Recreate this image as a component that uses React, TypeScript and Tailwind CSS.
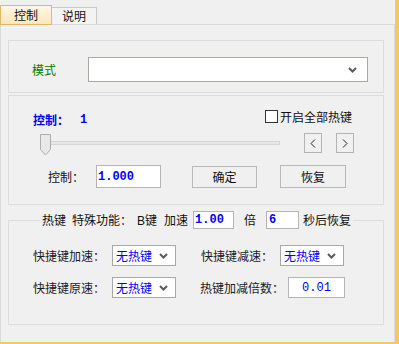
import React from 'react';

const cjk = { fontFamily: '"Noto Sans CJK SC", "Liberation Sans", sans-serif' };
const mono = { fontFamily: '"Liberation Mono", "Noto Sans CJK SC", monospace' };

function Chevron() {
  return (
    <svg width="9" height="6" viewBox="0 0 9 6" className="shrink-0">
      <polyline points="1,1 4.5,4.5 8,1" fill="none" stroke="#5a5a5a" strokeWidth="2" />
    </svg>
  );
}

function HotkeySelect() {
  return (
    <div className="w-[64px] h-[21px] border border-[#a9a9a9] bg-white flex items-center justify-between pl-[3px] pr-[7px] text-[12px] leading-none text-[#0000ff]">
      <span>无热键</span>
      <Chevron />
    </div>
  );
}

function Arrow({ dir }: { dir: 'left' | 'right' }) {
  return (
    <div className="w-[18px] h-[20px] border border-[#b4b4b4] bg-[#f0f0f0] flex items-center justify-center">
      <svg width="6" height="9" viewBox="0 0 6 9">
        <polyline
          points={dir === 'left' ? '5,0.5 1,4.5 5,8.5' : '1,0.5 5,4.5 1,8.5'}
          fill="none"
          stroke="#222"
          strokeWidth="1"
        />
      </svg>
    </div>
  );
}

function App() {
  return (
    <div
      className="w-[399px] h-[344px] flex flex-col bg-[#f0f0f0] border-r-[4px] border-b-[2px] border-[#f6c766] text-[12px] text-[#111]"
      style={cjk}
    >
      {/* tabs */}
      <div className="h-[24px] flex items-end shrink-0">
        <div className="w-[52px] h-[20px] -mb-[1px] relative z-10 border border-[#e6b866] bg-gradient-to-b from-[#fff7e6] to-[#fce6bb] flex items-center justify-center leading-none">
          控制
        </div>
        <div className="w-[45px] h-[17px] border-t border-r border-[#c9c9c9] bg-[#f3f3f3] flex items-center justify-center leading-none">
          说明
        </div>
      </div>

      {/* panel */}
      <div className="flex-1 flex flex-col border-t border-x border-[#dadada] pt-[15px] pl-[7px]">
        {/* mode */}
        <div className="w-[376px] h-[53px] border border-[#dcdcdc] pt-[16px] pl-[23px] flex items-start">
          <div className="h-[25px] flex items-center">
            <span className="w-[56px] text-[#008000] leading-none">模式</span>
            <div className="w-[280px] h-[25px] border border-[#aaa9a3] bg-white flex items-center justify-end pr-[10px]">
              <Chevron />
            </div>
          </div>
        </div>

        {/* control */}
        <div className="mt-[2px] w-[376px] h-[110px] border border-[#dcdcdc] flex flex-col">
          <div className="mt-[14px] h-[16px] flex items-start pl-[24px]">
            <div className="w-[232px] mt-[4px] flex text-[#0000ff] font-bold leading-[12px]">
              <span>控制：</span>
              <span className="ml-[11px]" style={mono}>1</span>
            </div>
            <div className="w-[13px] h-[13px] border border-[#333] bg-white" />
            <span className="ml-[2px] leading-[13px]">开启全部热键</span>
          </div>

          <div className="mt-[7px] h-[23px] flex items-start pl-[31px]">
            <div className="relative w-[240px] h-[23px]">
              <div className="absolute left-0 right-0 top-[8px] h-[4px] bg-[#e7e7e7] border border-[#d6d6d6]" />
              <svg className="absolute left-0 top-[1px]" width="11" height="22" viewBox="0 0 11 22">
                <polygon points="0.5,0.5 10.5,0.5 10.5,15.5 5.5,21 0.5,15.5" fill="#e8e8e8" stroke="#adadad" />
              </svg>
            </div>
            <div className="ml-[24px]">
              <Arrow dir="left" />
            </div>
            <div className="ml-[14px]">
              <Arrow dir="right" />
            </div>
          </div>

          <div className="mt-[9px] h-[23px] flex items-center pl-[39px]">
            <span className="w-[48px] leading-none">控制：</span>
            <div className="w-[65px] h-[23px] border border-[#b5b5b5] bg-white flex items-center pl-[1px] text-[#0000ff] font-bold leading-none" style={mono}>
              1.000
            </div>
            <div className="ml-[31px] w-[65px] h-[22px] border border-[#b8b8b8] bg-[#f0f0f0] flex items-center justify-center leading-none">
              确定
            </div>
            <div className="ml-[23px] w-[66px] h-[23px] border border-[#b8b8b8] bg-[#f0f0f0] flex items-center justify-center leading-none">
              恢复
            </div>
          </div>
        </div>

        {/* hotkeys */}
        <fieldset className="mt-[6px] w-[376px] h-[114px] border border-[#dcdcdc]">
          <legend className="ml-[31px] px-[2px]">
            <div className="h-[18px] flex items-center leading-none">
              <span>热键</span>
              <span className="ml-[6px]">特殊功能：</span>
              <span className="ml-[5px]">
                <span style={{ fontFamily: '"Liberation Sans", sans-serif' }}>B</span>键
              </span>
              <span className="ml-[7px]">加速</span>
              <div className="ml-[5px] w-[41px] h-[18px] border border-[#b5b5b5] bg-white flex items-center pl-[1px] text-[#0000ff] font-bold" style={mono}>
                1.00
              </div>
              <span className="ml-[10px]">倍</span>
              <div className="ml-[10px] w-[33px] h-[18px] border border-[#b5b5b5] bg-white flex items-center pl-[2px] text-[#0000ff] font-bold" style={mono}>
                6
              </div>
              <span className="ml-[4px]">秒后恢复</span>
            </div>
          </legend>

          <div className="mt-[16px] h-[21px] flex items-center pl-[24px]">
            <span className="w-[79px] leading-none text-[#1a1a2a]">快捷键加速：</span>
            <HotkeySelect />
            <span className="ml-[25px] w-[79px] leading-none text-[#1a1a2a]">快捷键减速：</span>
            <HotkeySelect />
          </div>

          <div className="mt-[11px] h-[21px] flex items-center pl-[24px]">
            <span className="w-[79px] leading-none text-[#1a1a2a]">快捷键原速：</span>
            <HotkeySelect />
            <span className="ml-[24px] w-[88px] leading-none text-[#1a1a2a]">热键加减倍数：</span>
            <div className="w-[57px] h-[21px] border border-[#b5b5b5] bg-white flex items-center justify-center text-[#0000ff] leading-none" style={mono}>
              0.01
            </div>
          </div>
        </fieldset>
      </div>
    </div>
  );
}

export default App;
